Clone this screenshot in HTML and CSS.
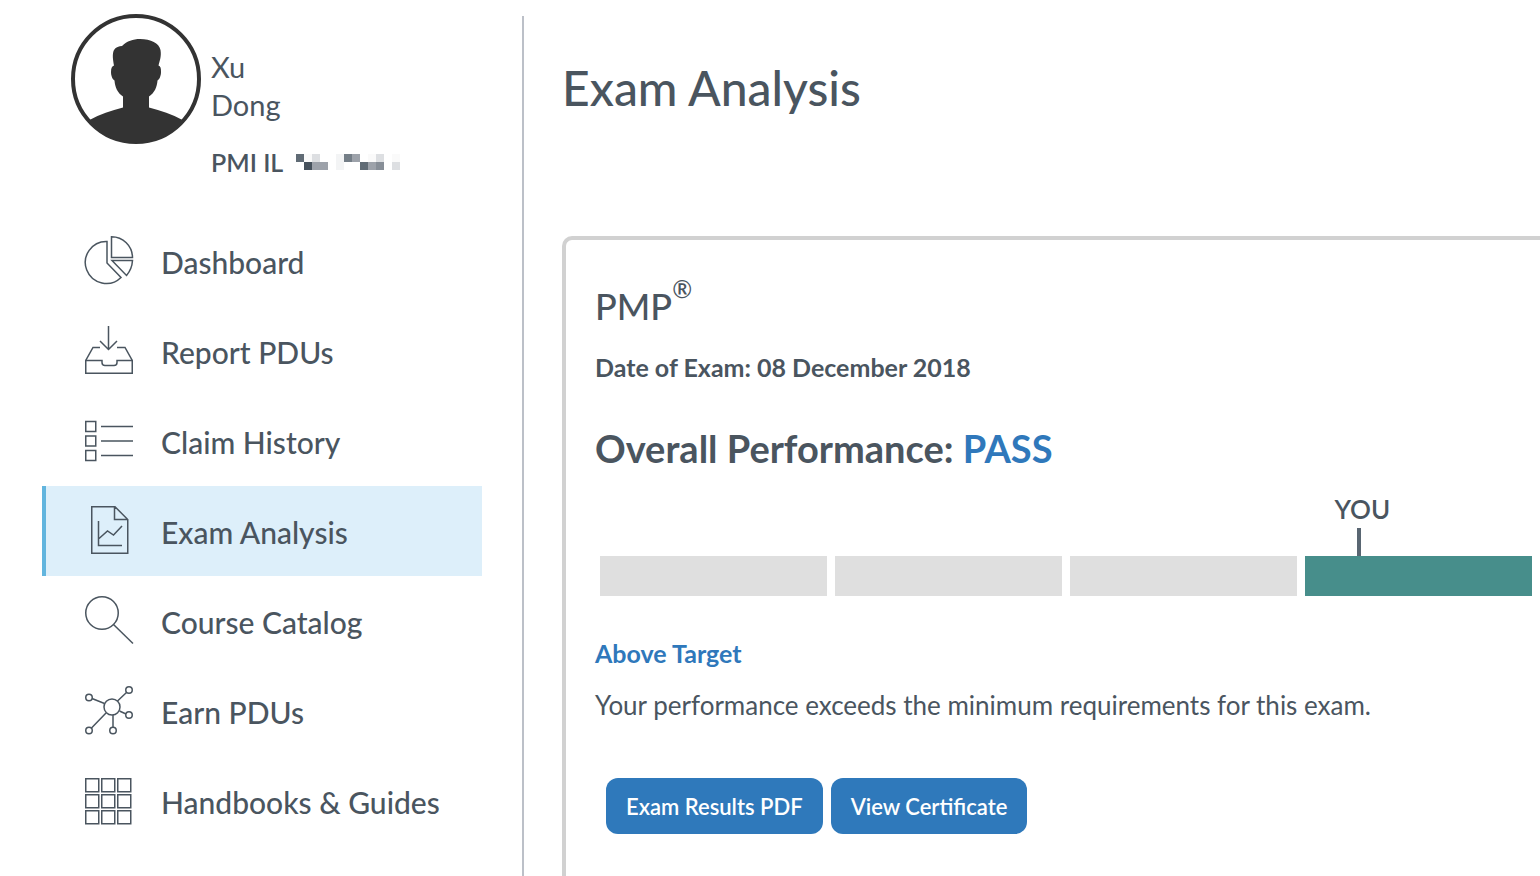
FILE: index.html
```html
<!DOCTYPE html>
<html lang="en">

<head>
  <meta charset="UTF-8">
  <title>Exam Analysis</title>
  <link rel="stylesheet" href="styles.css">
</head>

<body>
  <div class="page">
    <aside class="sidebar">
      <div class="profile">
        <svg class="avatar" viewBox="0 0 130 130" aria-hidden="true">
          <circle cx="65" cy="65" r="63" fill="#fff" stroke="#333" stroke-width="4" />
          <path fill="#333" d="M18.500 106C29 100 40 96.500 52 93.500V82.500C46.500 79 44 73 43.500 66.500C41 65 40 61 40 58C40 54 41 52 43 51.500C42 46 41 40 43 36C45 33 48 32 51 32C56 27 62 25 69 25C80 25 88 29 89.500 36C90.500 42 89 46 87.500 51.500C89.500 52 90 54 90 58C90 61 89 65 86.500 66.500C86 73 83.500 79 78 82.500V93.500C90 96.500 101 100 111.500 106C99 121 83 129 65 129C47 129 31 121 18.500 106Z" />
        </svg>
        <div class="profile-info">
          <p class="name">Xu<br>Dong</p>
          <p class="member">PMI IL
            <svg class="redacted" viewBox="0 0 104 16" shape-rendering="crispEdges" aria-hidden="true">
              <path fill="#606b75" d="M0 0h8v8H0zM64 8h8v8h-8z" />
              <path fill="#46515c" d="M8 8h8v8H8z" />
              <path fill="#9da2aa" d="M16 8h16v8H16zM56 0h8v8h-8zM72 8h8v8h-8z" />
              <path fill="#747e87" d="M48 0h8v8h-8z" />
              <path fill="#878e97" d="M80 8h8v8h-8z" />
              <path fill="#dddfe2" d="M16 0h8v8h-8zM80 0h8v8h-8zM96 8h8v8h-8z" />
              <path fill="#f3f4f5" d="M40 0h8v8h-8zM40 8h8v8h-8z" />
              <path fill="#fafafa" d="M8 0h8v8H8zM72 0h8v8h-8zM96 0h8v8h-8z" />
            </svg>
          </p>
        </div>
      </div>

      <nav class="menu">
        <a class="menu-item" href="#">
          <svg class="icon" viewBox="0 0 48 48" aria-hidden="true">
            <path d="M22 5.500A21 21 0 1 0 36 41.500L22 27Z" />
            <path d="M26.500 .750V21.500H47.500A21 21 0 0 0 26.500 .750Z" />
            <path d="M27 24.500H47.500Q47 33 41.500 39.500Z" />
          </svg>
          <span>Dashboard</span>
        </a>
        <a class="menu-item" href="#">
          <svg class="icon" viewBox="0 0 48 48" aria-hidden="true">
            <path d="M23.500 0V23M15 15L23.500 23.500L32 15" />
            <path d="M15 21.500H8L.750 34.500V47.250H47.250V34.500L40 21.500H32" />
            <path d="M.750 34.500H17V36.500Q17 39.500 20 39.500H29Q32 39.500 32 36.500V34.500H47.250" />
          </svg>
          <span>Report PDUs</span>
        </a>
        <a class="menu-item" href="#">
          <svg class="icon" viewBox="0 0 48 48" aria-hidden="true">
            <path d="M.750 5.500h10v10H.750zM.750 20h10v10H.750zM.750 34.500h10v10H.750z" />
            <path d="M16 10.500H48M16 25H48M16 39.500H48" />
          </svg>
          <span>Claim History</span>
        </a>
        <a class="menu-item active" href="#" aria-current="page">
          <svg class="icon" viewBox="0 0 48 48" aria-hidden="true">
            <path d="M6.750 .750H30L42.750 13.500V47.250H6.750ZM29.500 .750V13.500H42.750" />
            <path d="M13.500 15V39.500H37M13.500 33L22.500 25L28.500 29L37 20" />
          </svg>
          <span>Exam Analysis</span>
        </a>
        <a class="menu-item" href="#">
          <svg class="icon" viewBox="0 0 48 48" aria-hidden="true">
            <circle cx="17" cy="17" r="16.250" />
            <path d="M28.500 28.500L48 47.500" />
          </svg>
          <span>Course Catalog</span>
        </a>
        <a class="menu-item" href="#">
          <svg class="icon" viewBox="0 0 48 48" aria-hidden="true">
            <circle cx="27" cy="21" r="8" />
            <circle cx="4" cy="11.500" r="3.250" />
            <circle cx="44" cy="4" r="3.250" />
            <circle cx="44" cy="29" r="3.250" />
            <circle cx="4" cy="44.500" r="3.250" />
            <circle cx="28" cy="44.500" r="3.250" />
            <path d="M7 12.500L19.500 17.500M32.500 15L41.500 6.500M34.500 25L41 28M21 27L6.500 42M28 29V41" />
          </svg>
          <span>Earn PDUs</span>
        </a>
        <a class="menu-item" href="#">
          <svg class="icon" viewBox="0 0 48 48" aria-hidden="true">
            <path d="M.750 2.750h13v13h-13zM16.750 2.750h13v13h-13zM32.750 2.750h13v13h-13z" />
            <path d="M.750 18.750h13v13h-13zM16.750 18.750h13v13h-13zM32.750 18.750h13v13h-13z" />
            <path d="M.750 34.750h13v13h-13zM16.750 34.750h13v13h-13zM32.750 34.750h13v13h-13z" />
          </svg>
          <span>Handbooks &amp; Guides</span>
        </a>
      </nav>
    </aside>

    <main class="content">
      <h1>Exam Analysis</h1>

      <section class="card">
        <h2 class="exam">PMP<sup>&reg;</sup></h2>
        <p class="date">Date of Exam: 08 December 2018</p>
        <h3 class="overall">Overall Performance: <span class="result">PASS</span></h3>

        <div class="scale">
          <div class="segment"></div>
          <div class="segment"></div>
          <div class="segment"></div>
          <div class="segment reached">
            <div class="marker">YOU</div>
          </div>
        </div>

        <h4 class="rating">Above Target</h4>
        <p class="summary">Your performance exceeds the minimum requirements for this exam.</p>

        <div class="actions">
          <button type="button">Exam Results PDF</button>
          <button type="button">View Certificate</button>
        </div>
      </section>
    </main>
  </div>
</body>

</html>
```
FILE: styles.css
```css
* {
  box-sizing: border-box;
}

body {
  margin: 0;
  background: #fff;
  color: #4a555f;
  font-family: "Lato", sans-serif;
}

h1,
h2,
h3,
h4,
p {
  margin: 0;
}

.page {
  display: flex;
  min-height: 100vh;
}

/* sidebar */
.sidebar {
  flex: none;
  width: 482px;
  padding: 14px 0 0 42px;
}

.profile {
  display: flex;
  gap: 10px;
  padding-left: 29px;
}

.avatar {
  flex: none;
  width: 130px;
  height: 130px;
}

.profile-info {
  padding-top: 34px;
}

.name {
  font-size: 29px;
  line-height: 38px;
}

.member {
  display: flex;
  align-items: center;
  gap: 13px;
  margin-top: 20px;
  font-size: 25px;
  font-weight: 600;
  line-height: 36px;
}

.redacted {
  width: 104px;
  height: 16px;
}

.menu {
  margin-top: 36px;
}

.menu-item {
  display: flex;
  align-items: center;
  gap: 28px;
  height: 90px;
  padding: 0 0 2px 39px;
  border-left: 4px solid transparent;
  color: inherit;
  font-size: 30px;
  font-weight: 500;
  line-height: 40px;
  text-decoration: none;
}

.menu-item span {
  padding-top: 4px;
}

.menu-item.active {
  border-left-color: #62b5de;
  background: #ddeffa;
}

.icon {
  flex: none;
  width: 48px;
  height: 48px;
  overflow: visible;
  fill: none;
  stroke: #4a555f;
  stroke-width: 1.5;
}

/* content */
.content {
  display: flex;
  flex: 1;
  flex-direction: column;
  margin: 16px 0 0 40px;
  padding-left: 38px;
  border-left: 2px solid #bcc0c8;
}

h1 {
  padding-top: 42px;
  font-size: 48px;
  font-weight: 500;
  line-height: 60px;
}

.card {
  flex: 1;
  margin-top: 118px;
  padding: 40px 8px 40px 29px;
  border: solid #d1d1d1;
  border-width: 4px 0 0 4px;
  border-top-left-radius: 10px;
}

.exam {
  font-size: 36px;
  font-weight: 500;
  line-height: 52px;
}

.exam sup {
  font-size: 24px;
  line-height: 0;
  vertical-align: 22px;
}

.date {
  margin-top: 16px;
  font-size: 25px;
  font-weight: 700;
  line-height: 38px;
}

.overall {
  margin-top: 36px;
  font-size: 38px;
  font-weight: 700;
  line-height: 52px;
}

.result,
.rating {
  color: #2f78bb;
}

.scale {
  display: grid;
  grid-template-columns: repeat(4, 1fr);
  gap: 8px;
  margin: 82px 0 0 5px;
}

.segment {
  position: relative;
  height: 40px;
  background: #dfdfdf;
}

.segment.reached {
  background: #478e8b;
}

/* label and tick standing on the segment */
.marker {
  position: absolute;
  bottom: 100%;
  left: 13%;
  padding-bottom: 30px;
  font-size: 26px;
  font-weight: 600;
  line-height: 34px;
}

.marker::after {
  content: "";
  position: absolute;
  bottom: 0;
  left: 22px;
  width: 4px;
  height: 28px;
  background: #596672;
}

.rating {
  margin-top: 38px;
  font-size: 25px;
  font-weight: 700;
  line-height: 38px;
}

.summary {
  margin-top: 14px;
  font-size: 26px;
  line-height: 38px;
}

.actions {
  display: flex;
  gap: 8px;
  margin: 54px 0 0 11px;
}

.actions button {
  height: 56px;
  padding: 0 20px;
  border: 0;
  border-radius: 12px;
  background: #2f79bb;
  color: #fff;
  font-family: inherit;
  font-size: 22px;
  font-weight: 600;
}
```
